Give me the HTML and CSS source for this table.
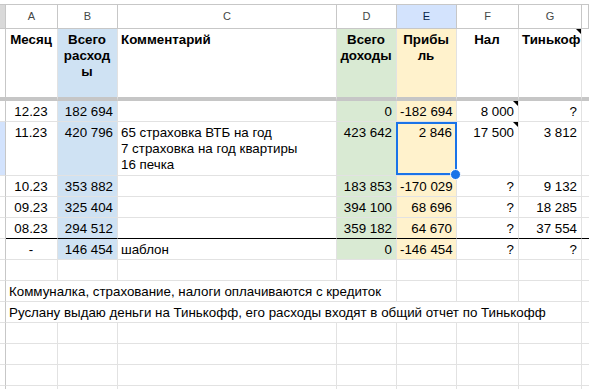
FILE: index.html
```html
<!DOCTYPE html>
<html lang="ru">
<head>
<meta charset="utf-8">
<title>Расходы</title>
<link rel="stylesheet" href="styles.css">
</head>
<body>
<div class="sheet">
  <div class="row colhead">
    <div class="c rh"></div>
    <div class="c">A</div>
    <div class="c">B</div>
    <div class="c">C</div>
    <div class="c">D</div>
    <div class="c sel">E</div>
    <div class="c">F</div>
    <div class="c">G</div>
    <div class="c"></div>
  </div>

  <div class="row titles">
    <div class="c rh"></div>
    <div class="c ctr">Месяц</div>
    <div class="c ctr blue">Всего<br>расход<br>ы</div>
    <div class="c">Комментарий</div>
    <div class="c ctr green">Всего<br>доходы</div>
    <div class="c ctr yellow">Прибы<br>ль</div>
    <div class="c ctr">Нал</div>
    <div class="c ctr note">Тинькоф</div>
    <div class="c"></div>
  </div>

  <div class="row h21">
    <div class="c rh"></div>
    <div class="c ctr">12.23</div>
    <div class="c r blue">182 694</div>
    <div class="c"></div>
    <div class="c r green">0</div>
    <div class="c r yellow">-182 694</div>
    <div class="c r note">8 000</div>
    <div class="c r">?</div>
    <div class="c"></div>
  </div>

  <div class="row h54">
    <div class="c rh selrow"></div>
    <div class="c ctr">11.23</div>
    <div class="c r blue">420 796</div>
    <div class="c">65 страховка ВТБ на год<br>7 страховка на год квартиры<br>16 печка</div>
    <div class="c r green">423 642</div>
    <div class="c r yellow active">2 846</div>
    <div class="c r note">17 500</div>
    <div class="c r">3 812</div>
    <div class="c"></div>
  </div>

  <div class="row h21">
    <div class="c rh"></div>
    <div class="c ctr">10.23</div>
    <div class="c r blue">353 882</div>
    <div class="c"></div>
    <div class="c r green">183 853</div>
    <div class="c r yellow">-170 029</div>
    <div class="c r">?</div>
    <div class="c r">9 132</div>
    <div class="c"></div>
  </div>

  <div class="row h21">
    <div class="c rh"></div>
    <div class="c ctr">09.23</div>
    <div class="c r blue">325 404</div>
    <div class="c"></div>
    <div class="c r green">394 100</div>
    <div class="c r yellow">68 696</div>
    <div class="c r">?</div>
    <div class="c r">18 285</div>
    <div class="c"></div>
  </div>

  <div class="row h21 total-above">
    <div class="c rh"></div>
    <div class="c ctr">08.23</div>
    <div class="c r blue">294 512</div>
    <div class="c"></div>
    <div class="c r green">359 182</div>
    <div class="c r yellow">64 670</div>
    <div class="c r">?</div>
    <div class="c r">37 554</div>
    <div class="c"></div>
  </div>

  <div class="row h21">
    <div class="c rh"></div>
    <div class="c ctr">-</div>
    <div class="c r blue">146 454</div>
    <div class="c">шаблон</div>
    <div class="c r green">0</div>
    <div class="c r yellow">-146 454</div>
    <div class="c r">?</div>
    <div class="c r">?</div>
    <div class="c"></div>
  </div>

  <div class="row h21">
    <div class="c rh"></div>
    <div class="c"></div><div class="c"></div><div class="c"></div><div class="c"></div>
    <div class="c"></div><div class="c"></div><div class="c"></div><div class="c"></div>
  </div>

  <div class="row h21">
    <div class="c rh"></div>
    <div class="c span4">Коммуналка, страхование, налоги оплачиваются с кредиток</div>
    <div class="c"></div><div class="c"></div><div class="c"></div><div class="c"></div>
  </div>

  <div class="row h21">
    <div class="c rh"></div>
    <div class="c span7">Руслану выдаю деньги на Тинькофф, его расходы входят в общий отчет по Тинькофф</div>
    <div class="c"></div>
  </div>

  <div class="row h21">
    <div class="c rh"></div>
    <div class="c"></div><div class="c"></div><div class="c"></div><div class="c"></div>
    <div class="c"></div><div class="c"></div><div class="c"></div><div class="c"></div>
  </div>
  <div class="row h21">
    <div class="c rh"></div>
    <div class="c"></div><div class="c"></div><div class="c"></div><div class="c"></div>
    <div class="c"></div><div class="c"></div><div class="c"></div><div class="c"></div>
  </div>
  <div class="row h21">
    <div class="c rh"></div>
    <div class="c"></div><div class="c"></div><div class="c"></div><div class="c"></div>
    <div class="c"></div><div class="c"></div><div class="c"></div><div class="c"></div>
  </div>
  <div class="row h21">
    <div class="c rh"></div>
    <div class="c"></div><div class="c"></div><div class="c"></div><div class="c"></div>
    <div class="c"></div><div class="c"></div><div class="c"></div><div class="c"></div>
  </div>
</div>
</body>
</html>
```

FILE: styles.css
```css
* {
  box-sizing: border-box;
}

html, body {
  margin: 0;
  padding: 0;
  background: #fff;
  overflow: hidden;
}

body {
  width: 589px;
  height: 389px;
  font-family: "Liberation Sans", Arial, sans-serif;
  font-size: 13.333px;
  color: #000;
}

.sheet {
  padding-top: 4px;
  display: flex;
  flex-direction: column;
}

.row {
  display: grid;
  grid-template-columns: 6px 52px 60px 219px 60px 60px 62px 63px 1fr;
  flex: none;
}

.c {
  position: relative;
  border-right: 1px solid #e2e2e2;
  border-bottom: 1px solid #e2e2e2;
  padding: 3px 4px 0 3px;
  line-height: 16px;
  white-space: nowrap;
  overflow: hidden;
}

.rh {
  padding: 0;
  border-right-color: #c7c7c7;
  border-bottom-color: #e2e2e2;
}

/* column letters */
.colhead {
  height: 25px;
  border-top: 1px solid #c7c7c7;
}

.colhead .c {
  padding: 0;
  text-align: center;
  font-size: 11px;
  line-height: 23px;
  color: #444746;
  border-right-color: #c7c7c7;
  border-bottom-color: #c7c7c7;
}

.colhead .rh {
  background: #d9d9d9;
}

.colhead .sel {
  background: #d3e3fd;
  color: #041e49;
}

/* title row */
.titles {
  height: 72px;
}

.titles .c {
  font-weight: bold;
  border-bottom: 4px solid #c6c6c6;
}

.h21 { height: 21px; }
.h54 { height: 54px; }

.total-above .c {
  border-bottom-color: #000;
}

.total-above .rh {
  border-bottom-color: #e2e2e2;
}

.ctr { text-align: center; }
.r { text-align: right; }

.blue { background: #cfe2f3; }
.green { background: #d9ead3; }
.yellow { background: #fff2cc; }

.selrow { background: #d3e3fd; }

.span4 { grid-column: span 4; }
.span7 { grid-column: span 7; }

/* note indicator */
.note::after {
  content: "";
  position: absolute;
  top: 0;
  right: 0;
  border-top: 5px solid #000;
  border-left: 5px solid transparent;
}

/* active cell */
.active {
  overflow: visible;
  z-index: 2;
}

.active::before {
  content: "";
  position: absolute;
  top: 0;
  left: -1px;
  right: -1px;
  bottom: 0;
  border: 2px solid #1a73e8;
}

.active::after {
  content: "";
  position: absolute;
  right: -5px;
  bottom: -5px;
  width: 9px;
  height: 9px;
  border-radius: 50%;
  background: #1a73e8;
  border: 1px solid #fff;
}
```
